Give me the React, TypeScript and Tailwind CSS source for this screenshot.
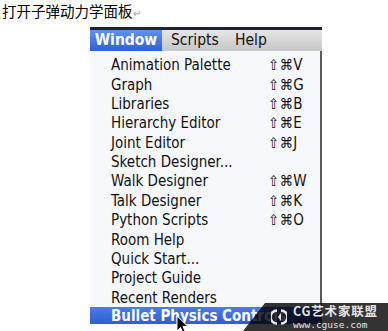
import React from 'react';

type Item = { label: string; keys?: string };

const items: Item[] = [
  { label: 'Animation Palette', keys: 'V' },
  { label: 'Graph', keys: 'G' },
  { label: 'Libraries', keys: 'B' },
  { label: 'Hierarchy Editor', keys: 'E' },
  { label: 'Joint Editor', keys: 'J' },
  { label: 'Sketch Designer...' },
  { label: 'Walk Designer', keys: 'W' },
  { label: 'Talk Designer', keys: 'K' },
  { label: 'Python Scripts', keys: 'O' },
  { label: 'Room Help' },
  { label: 'Quick Start...' },
  { label: 'Project Guide' },
  { label: 'Recent Renders' },
];

const menuFont = { fontFamily: '"DejaVu Sans Condensed", "DejaVu Sans", sans-serif' };

const App: React.FC = () => {
  return (
    <div className="w-[388px] h-[331px] bg-white relative overflow-hidden">
      {/* caption */}
      <div
        className="pl-[2px] pt-[2px] h-[20px] text-[14.5px] leading-[18px] text-black"
        style={{ fontFamily: '"Noto Sans CJK SC", sans-serif' }}
      >
        打开子弹动力学面板<span className="text-[10px] text-gray-400">↵</span>
      </div>

      {/* menu screenshot */}
      <div className="ml-[90px] mt-[7px] w-[232px]" style={menuFont}>
        <div className="h-[3px] bg-[#1e2436]" />
        <div className="h-[21px] flex items-center bg-gradient-to-b from-[#e6e6e6] to-[#c6c6c6] text-[15.5px] text-[#111]">
          <div className="h-full w-[72px] flex items-center justify-center bg-gradient-to-b from-[#5f93f2] to-[#2c60d6] text-white font-bold">
            Window
          </div>
          <div className="pl-[9px] w-[73px]">Scripts</div>
          <div>Help</div>
        </div>
        <div className="flex">
          <div className="flex-1 bg-[#f6f8fc] pt-[5px] pb-[1px]">
            {items.map((it) => (
              <div key={it.label} className="h-[19.35px] flex items-center text-[15px] text-[#111] pl-[21px]">
                <span className="w-[157px]">{it.label}</span>
                {it.keys && <span className="tracking-[0.2px]">⇧⌘{it.keys}</span>}
              </div>
            ))}
            <div className="h-[17px] flex items-center text-[15px] pl-[21px] text-white font-bold bg-gradient-to-b from-[#4a7de6] to-[#2d5fd0] whitespace-nowrap overflow-hidden">
              Bullet Physics Controls
            </div>
          </div>
          <div className="w-[2px] bg-[#5a5a5a]" />
        </div>
      </div>

      {/* mouse cursor */}
      <svg className="absolute left-[176px] top-[315px]" width="14" height="20" viewBox="0 0 14 20">
        <path d="M1 1 L1 16 L4.5 12.5 L7 18 L9.5 17 L7 11.5 L12 11.5 Z" fill="#000" stroke="#fff" strokeWidth="1" />
      </svg>

      {/* watermark */}
      <div className="absolute left-[243px] top-[303px] w-[145px] h-[28px] bg-black/80 [clip-path:polygon(22px_0,100%_0,100%_100%,0_100%)]" />
      <div className="absolute left-[271px] top-[304px] flex items-center gap-[6px]">
        <svg width="16" height="18" viewBox="0 0 16 18">
          <path d="M6 2.5 A6.5 6.5 0 0 0 6 15.5" fill="none" stroke="#e8e8e8" strokeWidth="2.6" />
          <path d="M10 2.5 A6.5 6.5 0 0 1 10 15.5" fill="none" stroke="#e8e8e8" strokeWidth="2.6" />
          <path d="M7 9 L10 5 L10 13 Z" fill="#e8e8e8" />
        </svg>
        <div className="flex flex-col text-[#e6e6e6]">
          <span
            className="text-[12.5px] leading-[14px] font-bold tracking-[0.8px]"
            style={{ fontFamily: '"Noto Sans CJK SC", sans-serif' }}
          >
            CG艺术家联盟
          </span>
          <span
            className="text-[9.5px] leading-[10px] mt-[2px]"
            style={{ fontFamily: '"DejaVu Sans Mono", monospace' }}
          >
            www.cguse.com
          </span>
        </div>
      </div>
    </div>
  );
};

export default App;
